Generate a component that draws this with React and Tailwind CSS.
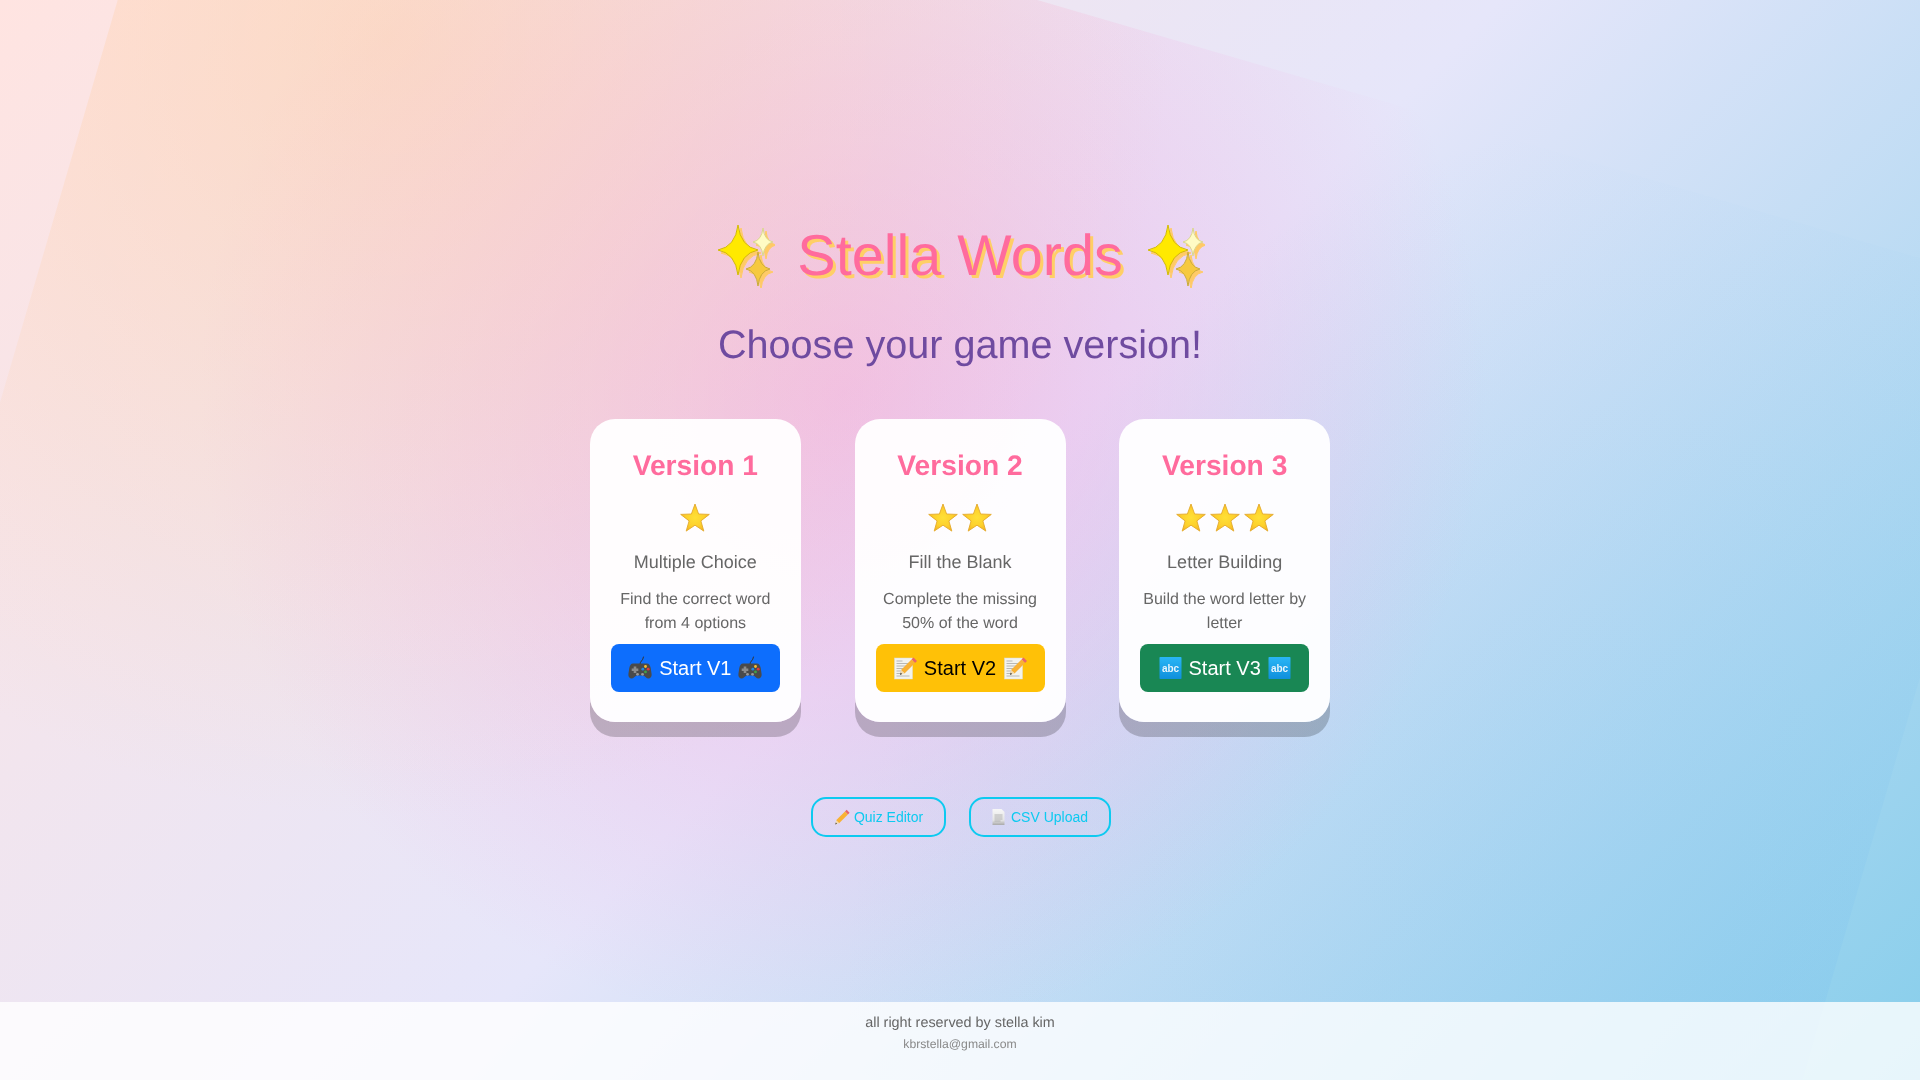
function Spark({ cx, cy, rx, ry, fill, stroke }) {
  const k = 0.13;
  const d = `M${cx} ${cy - ry}Q${cx + rx * k} ${cy - ry * k} ${cx + rx} ${cy}Q${cx + rx * k} ${cy + ry * k} ${cx} ${cy + ry}Q${cx - rx * k} ${cy + ry * k} ${cx - rx} ${cy}Q${cx - rx * k} ${cy - ry * k} ${cx} ${cy - ry}Z`;
  return <path d={d} fill={fill} stroke={stroke} strokeWidth="1" strokeLinejoin="round" />;
}

function Sparkles() {
  const shadow = "#ffca66";
  return (
    <svg viewBox="5 8 60 64" className="w-[60px] h-[64px] shrink-0">
      <g transform="translate(3 3)">
        <Spark cx={28} cy={34} rx={20} ry={25} fill={shadow} stroke={shadow} />
        <Spark cx={53} cy={26} rx={10} ry={14} fill={shadow} stroke={shadow} />
        <Spark cx={48} cy={53} rx={12} ry={17} fill={shadow} stroke={shadow} />
      </g>
      <Spark cx={53} cy={26} rx={10} ry={14} fill="#fffbc4" stroke="#d9d68e" />
      <Spark cx={48} cy={53} rx={12} ry={17} fill="#f6c93f" stroke="#c9ab3a" />
      <Spark cx={28} cy={34} rx={20} ry={25} fill="#ffe900" stroke="#d2bb00" />
    </svg>
  );
}

function StarIcon() {
  return (
    <svg viewBox="0 0 30 30" className="w-[30px] h-[30px] shrink-0">
      <defs>
        <radialGradient id="starFill" cx="50%" cy="50%" r="55%">
          <stop offset="0%" stopColor="#ffe036" />
          <stop offset="60%" stopColor="#fdd02c" />
          <stop offset="100%" stopColor="#f4b01f" />
        </radialGradient>
      </defs>
      <polygon
        points="15,1 18.6,11 29.3,11.4 20.9,17.9 23.8,28.1 15,22.2 6.2,28.1 9.1,17.9 0.7,11.4 11.4,11"
        fill="url(#starFill)"
        stroke="#e3a92b"
        strokeWidth="0.9"
        strokeLinejoin="round"
      />
    </svg>
  );
}

function Gamepad() {
  return (
    <svg viewBox="0 0 24 24" className="w-[24px] h-[24px] shrink-0">
      <path d="M12 8C12 5 15 5 15.5 1" fill="none" stroke="#333333" strokeWidth="1" strokeLinecap="round" />
      <path d="M5 7.500H19C21 7.500 22 9 22.700 12L23.600 18C24 21 22 22.800 20 22.500C18 22.200 17 20 15.500 19.500H8.500C7 20 6 22.200 4 22.500C2 22.800 0 21 .4 18L1.300 12C2 9 3 7.500 5 7.500Z" fill="#4a4a4a" />
      <path d="M5.700 10.500h2.600v2h2v2.400h-2v2h-2.600v-2h-2v-2.400h2z" fill="#8c8c8c" />
      <circle cx="17.500" cy="10.500" r="1.400" fill="#fbc02d" />
      <circle cx="20.200" cy="13.200" r="1.400" fill="#e53935" />
      <circle cx="17.500" cy="15.900" r="1.400" fill="#43a047" />
      <circle cx="14.800" cy="13.200" r="1.400" fill="#1e88e5" />
      <circle cx="9.500" cy="18.300" r="1.400" fill="#9a9a9a" />
      <circle cx="14.500" cy="18.300" r="1.400" fill="#9a9a9a" />
    </svg>
  );
}

function PencilShape() {
  return (
    <g>
      <path d="M17.500 2.500l3.500 3.500-2 2-3.500-3.500z" fill="#e8656a" />
      <path d="M15.500 4.500l3.500 3.500-10.500 10.500-3.500-3.500z" fill="#f9b233" />
      <path d="M5 15l3.500 3.500-4.500 1.500z" fill="#f3dcb0" />
      <path d="M4.700 17.600l1.300 1.400-2 1z" fill="#333333" />
    </g>
  );
}

function Memo() {
  return (
    <svg viewBox="0 0 24 24" className="w-[24px] h-[24px] shrink-0">
      <rect x="1.500" y="2" width="18" height="21" fill="#f3f3ee" stroke="#dcdcd4" strokeWidth="0.5" />
      <path d="M3.500 5h6M3.500 7.500h14M3.500 10h12M3.500 12.500h10M3.500 15h8M3.500 17.500h6M3.500 20h13" stroke="#a8a8a4" strokeWidth="0.8" />
      <g transform="translate(3 -1)"><PencilShape /></g>
    </svg>
  );
}

function Abc() {
  return (
    <svg viewBox="0 0 23 24" className="w-[23px] h-[24px] shrink-0">
      <defs>
        <linearGradient id="abcFill" x1="0" y1="0" x2="0" y2="1">
          <stop offset="0%" stopColor="#29b6f6" />
          <stop offset="100%" stopColor="#0f8fdc" />
        </linearGradient>
      </defs>
      <rect x="0.500" y="1" width="22" height="22" rx="0.800" fill="url(#abcFill)" />
      <text x="11.500" y="15.500" textAnchor="middle" fontSize="10" fontWeight="700" fill="#e6f4fc" fontFamily="'Liberation Sans', sans-serif">abc</text>
    </svg>
  );
}

function Pencil() {
  return (
    <svg viewBox="2.500 1.500 19 19" className="w-[16px] h-[16px] shrink-0"><PencilShape /></svg>
  );
}

function Doc() {
  return (
    <svg viewBox="0 0 13 16" className="w-[13px] h-[16px] shrink-0">
      <defs>
        <linearGradient id="docFill" x1="0" y1="0" x2="0" y2="1">
          <stop offset="0%" stopColor="#f7f7f7" />
          <stop offset="70%" stopColor="#e4e4e4" />
          <stop offset="100%" stopColor="#a9a9a9" />
        </linearGradient>
      </defs>
      <path d="M.5 0H9.500L12.500 3V16H.5Z" fill="url(#docFill)" />
      <path d="M2.500 6h8M2.500 8h8M2.500 10h8M2.500 12h6" stroke="#a5a5a5" strokeWidth="0.8" />
    </svg>
  );
}

const cards = [
  { v: "Version 1", stars: 1, mode: "Multiple Choice", desc: "Find the correct word from 4 options", Icon: Gamepad, label: "Start V1", btn: "bg-[#0d6efd] text-white" },
  { v: "Version 2", stars: 2, mode: "Fill the Blank", desc: "Complete the missing 50% of the word", Icon: Memo, label: "Start V2", btn: "bg-[#ffc107] text-black" },
  { v: "Version 3", stars: 3, mode: "Letter Building", desc: "Build the word letter by letter", Icon: Abc, label: "Start V3", btn: "bg-[#198754] text-white" },
];

function Card({ c }) {
  const Icon = c.Icon;
  return (
    <div className="w-[211px] h-[303px] rounded-[25px] bg-white/95 shadow-[0_15px_0_rgba(0,0,0,0.2)] px-[21px] pt-[29px] flex flex-col items-center text-center">
      <h3 className="text-[28.2px] leading-[34px] font-bold text-[#ff6b9d]">{c.v}</h3>
      <div className="flex gap-[4px] mt-[21px]">
        {Array.from({ length: c.stars }).map((_, i) => <StarIcon key={i} />)}
      </div>
      <h5 className="text-[18px] leading-[22px] text-[#666666] mt-[18px]">{c.mode}</h5>
      <p className="text-[16px] leading-[24px] text-[#666666] mt-[15px] w-full">{c.desc}</p>
      <button className={`${c.btn} mt-[8px] w-[169px] h-[48px] rounded-[8px] text-[20px] leading-[30px] whitespace-nowrap flex items-center justify-center gap-[7px]`}>
        <Icon />
        <span>{c.label}</span>
        <Icon />
      </button>
    </div>
  );
}

export default function App() {
  return (
    <div className="relative w-full h-[1080px] overflow-hidden flex flex-col [font-family:'Liberation_Sans',Arial,sans-serif] [text-rendering:geometricPrecision] bg-[linear-gradient(135deg,#ffe4e1_0%,#e6e6fa_50%,#87ceeb_100%)]">
      <div className="absolute inset-0 rotate-[16.3deg] bg-[radial-gradient(circle_at_14%_20%,rgba(255,205,160,0.46)_0%,transparent_42%),radial-gradient(circle_at_42%_40%,rgba(243,165,225,0.6)_0%,transparent_50%),radial-gradient(circle_at_95%_70%,rgba(120,190,240,0.2)_0%,transparent_45%)]"></div>
      <main className="relative flex-1 flex flex-col items-center pt-[218px] [will-change:transform]">
        <div className="flex items-center gap-[22px]">
          <Sparkles />
          <h1 className="text-[57.6px] leading-[76px] text-[#ff6b9d] [text-shadow:3px_3px_0_#ffcf66]">Stella Words</h1>
          <Sparkles />
        </div>
        <h2 className="text-[39.6px] leading-[48px] text-[#6f4ba0] mt-[27px]">Choose your game version!</h2>
        <div className="flex gap-[53.67px] mt-[50px]">
          {cards.map((c) => <Card key={c.v} c={c} />)}
        </div>
        <div className="flex gap-[23px] mt-[75px] pl-[2px]">
          <button className="h-[40px] w-[135px] rounded-[15px] border-2 border-[#0dcaf0] text-[#0dcaf0] text-[14px] whitespace-nowrap flex items-center justify-center gap-[4px]"><Pencil /><span>Quiz Editor</span></button>
          <button className="h-[40px] w-[142px] rounded-[15px] border-2 border-[#0dcaf0] text-[#0dcaf0] text-[14px] whitespace-nowrap flex items-center justify-center gap-[6px]"><Doc /><span>CSV Upload</span></button>
        </div>
      </main>
      <footer className="relative h-[78px] bg-white/80 flex flex-col items-center pt-[11px] [will-change:transform]">
        <p className="text-[14.4px] leading-[21px] text-[#666666]">all right reserved by stella kim</p>
        <p className="text-[12.2px] leading-[18px] text-[#888888] mt-[1px]">kbrstella@gmail.com</p>
      </footer>
    </div>
  );
}
